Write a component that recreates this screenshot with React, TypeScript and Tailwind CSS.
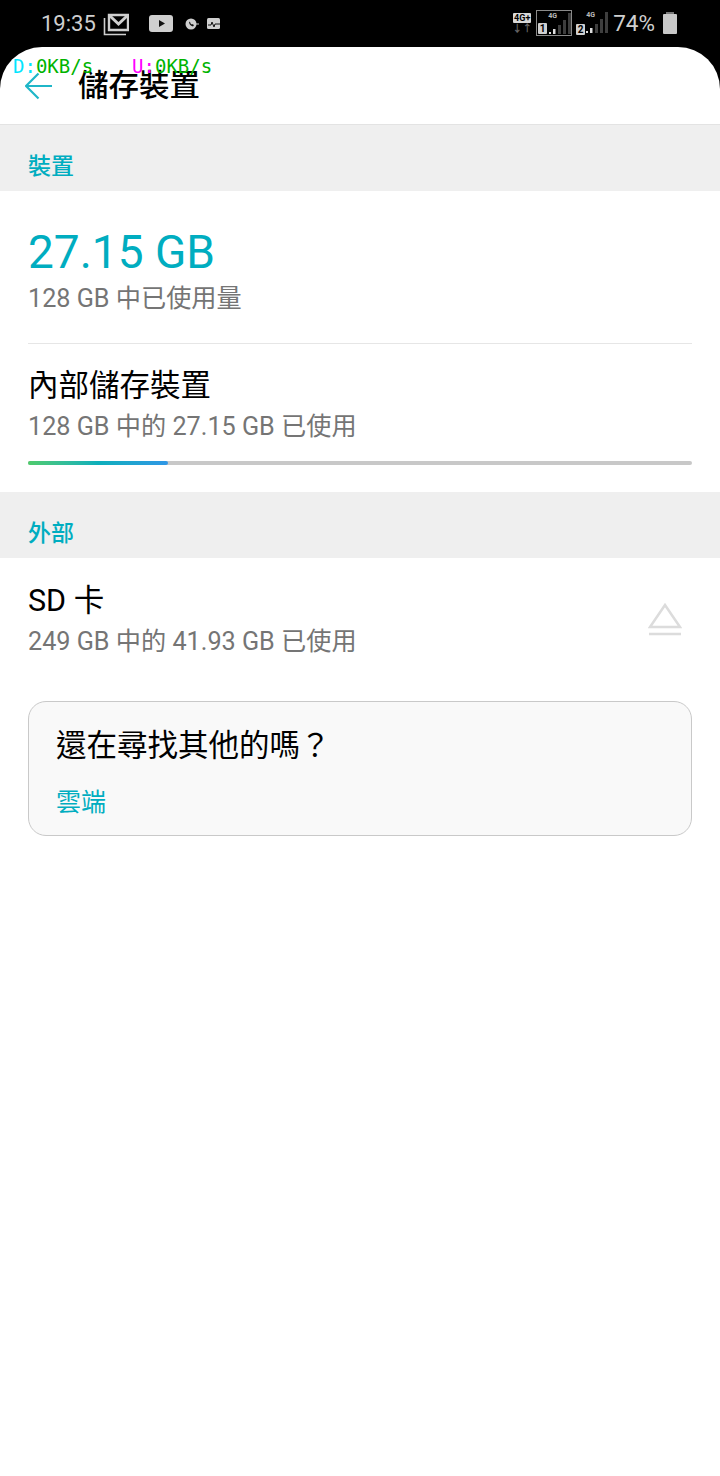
import React from "react";

const FONT = "font-['Roboto','Noto_Sans_CJK_TC',sans-serif]";

function Signal({ slot, boxed }: { slot: string; boxed?: boolean }) {
  return (
    <div className={`relative h-[26px] ${boxed ? "w-[36px] border border-[#8a8a8a]" : "w-[33px]"}`}>
      <span className="absolute top-[1px] left-[11px] text-[7px] leading-[8px] font-bold text-[#bbbbbb]">4G</span>
      <span className="absolute left-[1px] bottom-[1px] flex h-[11px] w-[9px] items-center justify-center rounded-[1px] bg-[#d0d0d0] text-[10px] leading-none font-bold text-black">
        {slot}
      </span>
      <svg className="absolute top-0 right-0" width="24" height="26" viewBox="0 0 24 26">
        <path d="M2 23h2v-2H2z" fill="#ddd" />
        <path d="M6 23h2.500v-5H6z" fill="#ddd" />
        <path d="M11 23h3v-9h-3zM16 23h3V9h-3zM21 23h3V2h-3z" fill="#3e3e3e" />
      </svg>
    </div>
  );
}

function StatusBar() {
  return (
    <div className="flex h-[47px] items-start justify-between bg-black pr-[43px] pl-[41px] text-[#cfcfcf]">
      <div className="flex items-center pt-[9px]">
        <span className="text-[22px] leading-[30px]">19:35</span>
        <svg className="ml-[7px]" width="26" height="24" viewBox="0 0 26 24" fill="none" stroke="#cfcfcf" strokeWidth="2.400">
          <path d="M6 3h19v15H6z" />
          <path d="M7 4l8.500 8L24 4" strokeWidth="3" />
          <path d="M1.500 6v16.500H23" strokeWidth="1.600" />
        </svg>
        <svg className="ml-[20px]" width="24" height="18" viewBox="0 0 24 18">
          <rect width="24" height="17" rx="3" fill="#cfcfcf" />
          <path d="M10 5l6 3.500-6 3.500z" fill="#111" />
        </svg>
        <svg className="ml-[12px]" width="14" height="14" viewBox="0 0 14 14">
          <circle cx="6" cy="7" r="5.500" fill="#cfcfcf" />
          <path d="M4 4.500q0 4 4 5l1-1.500-2-1-1 .5-.7-2z" fill="#111" />
          <path d="M11 7h3" stroke="#cfcfcf" />
        </svg>
        <svg className="ml-[8px]" width="14" height="12" viewBox="0 0 14 12">
          <rect width="13" height="11" rx="1.500" fill="#cfcfcf" />
          <path d="M1 7h3l1-3 2 5 1-3h5" stroke="#111" fill="none" strokeWidth="1" />
        </svg>
      </div>
      <div className="flex items-start pt-[10px]">
        <div className="mr-[4px] flex flex-col items-center pt-[3px]">
          <span className="rounded-[1px] bg-[#d8d8d8] px-[1px] text-[9px] leading-[10px] font-bold text-black">4G+</span>
          <span className="text-[10px] leading-[12px] font-bold text-[#666666]">↓↑</span>
        </div>
        <Signal slot="1" boxed />
        <div className="w-[3px]" />
        <Signal slot="2" />
        <span className="ml-[5px] text-[22.500px] leading-[27px]">74%</span>
        <div className="mt-[2px] ml-[8px] flex flex-col items-center">
          <div className="h-[2px] w-[8px] bg-[#777777]" />
          <div className="h-[20px] w-[14px] rounded-[1px] bg-[#c8c8c8]" />
        </div>
      </div>
    </div>
  );
}

function SectionLabel({ children }: { children: React.ReactNode }) {
  return (
    <div className="flex h-[66px] items-end bg-[#efefef] px-[28px] pb-[9px] text-[23px] leading-[30px] font-medium text-[#00adc0]">
      {children}
    </div>
  );
}

export default function App() {
  return (
    <div className={`relative h-[1476px] w-[720px] overflow-hidden bg-white ${FONT}`}>
      <StatusBar />

      {/* network speed overlay */}
      <div className="absolute top-[55px] left-[13px] z-10 flex font-['DejaVu_Sans_Mono',monospace] text-[19px] leading-[22px] whitespace-pre text-[#00b300]">
        <span>
          <span className="text-[#00e5ff]">D:</span>0KB/s
        </span>
        <span className="ml-[39px]">
          <span className="text-[#ff00ff]">U:</span>0KB/s
        </span>
      </div>

      <div className="bg-black">
        <header className="flex h-[77px] items-center rounded-t-[42px] bg-white pl-[25px]">
          <svg width="28" height="28" viewBox="0 0 28 28" fill="none" stroke="#1fb6c8" strokeWidth="2.200">
            <path d="M27 14H1M13.500 1.500L1 14l12.500 12.500" />
          </svg>
          <h1 className="ml-[25px] text-[30.500px] leading-[40px] font-medium text-black">儲存裝置</h1>
        </header>
      </div>

      <div className="border-t border-[#e3e3e3]">
        <SectionLabel>裝置</SectionLabel>
      </div>

      <section className="px-[28px]">
        <div className="border-b border-[#e6e6e6] pt-[33px] pb-[30px]">
          <div className="text-[46px] leading-[56px] text-[#00adc0]">27.15 GB</div>
          <div className="mt-[5px] text-[25.200px] leading-[28px] text-[#757575]">128 GB 中已使用量</div>
        </div>
        <div className="pt-[24px] pb-[27px]">
          <div className="text-[30.500px] leading-[36px] text-black">內部儲存裝置</div>
          <div className="mt-[7px] text-[25.200px] leading-[32px] text-[#757575]">128 GB 中的 27.15 GB 已使用</div>
          <div className="mt-[18px] h-[4px] rounded-full bg-[#c8c8c8]">
            <div className="h-full w-[140px] rounded-full bg-gradient-to-r from-[#4fcb6b] via-[#0cafbb] to-[#2f96e6]" />
          </div>
        </div>
      </section>

      <SectionLabel>外部</SectionLabel>

      <section className="flex items-center justify-between py-[24px] pr-[38px] pl-[28px]">
        <div>
          <div className="text-[30.500px] leading-[38px] text-black">SD 卡</div>
          <div className="mt-[6px] text-[25.200px] leading-[32px] text-[#757575]">249 GB 中的 41.93 GB 已使用</div>
        </div>
        <svg className="-mt-[2px]" width="34" height="34" viewBox="0 0 34 34" fill="none" stroke="#dcdcdc" strokeWidth="2.500">
          <path d="M17 3L2 25h30zM1 32h32" />
        </svg>
      </section>

      <div className="mx-[28px] mt-[19px] h-[135px] rounded-[18px] border border-[#c9c9c9] bg-[#f9f9f9] px-[27px] pt-[24px]">
        <div className="text-[30.500px] leading-[40px] text-black">還在尋找其他的嗎？</div>
        <div className="mt-[21px] text-[25px] leading-[32px] text-[#00adc0]">雲端</div>
      </div>
    </div>
  );
}
